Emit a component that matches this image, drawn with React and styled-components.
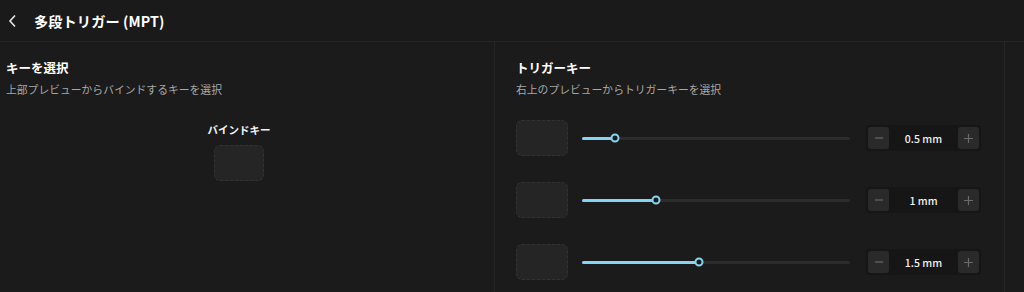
import React from "react";
import styled, { createGlobalStyle } from "styled-components";

const GlobalStyle = createGlobalStyle`
  html, body {
    margin: 0;
    padding: 0;
    background: #1b1b1b;
  }
  body {
    font-family: "Noto Sans CJK JP", "Noto Sans", sans-serif;
    color: #f2f2f2;
  }
`;

const Page = styled.div`
  width: 1024px;
  height: 292px;
  overflow: hidden;
  background: #1b1b1b;
  display: flex;
  flex-direction: column;
`;

const Header = styled.div`
  height: 41px;
  flex-shrink: 0;
  display: flex;
  align-items: center;
  gap: 14px;
  padding-left: 8px;
  border-bottom: 1px solid #262626;
  background: #1a1a1a;
`;

const BackButton = styled.button`
  background: none;
  border: none;
  padding: 0;
  width: 12px;
  height: 16px;
  display: flex;
  align-items: center;
  cursor: pointer;
`;

const Title = styled.h1`
  margin: 0;
  font-size: 14.2px;
  font-weight: 700;
  color: #ffffff;
  letter-spacing: 0.1px;
`;

const Body = styled.div`
  flex: 1;
  display: flex;
`;

const Panel = styled.section`
  width: ${(p) => p.width}px;
  flex-shrink: 0;
  box-sizing: border-box;
  padding: ${(p) => p.pad};
  border-right: 1px solid #262626;
`;

const Filler = styled.div`
  flex: 1;
`;

const SectionTitle = styled.h2`
  margin: 0;
  font-size: 12.5px;
  font-weight: 700;
  color: #ffffff;
  line-height: 18px;
`;

const SectionDesc = styled.p`
  margin: 4px 0 0;
  font-size: 10.8px;
  color: #a8a8a8;
  line-height: 16px;
`;

const BindArea = styled.div`
  display: flex;
  flex-direction: column;
  align-items: center;
  width: 466px;
  margin-top: 26px;
  gap: 8px;
`;

const BindLabel = styled.div`
  font-size: 10.5px;
  font-weight: 700;
  color: #f2f2f2;
  line-height: 14px;
`;

const KeySlot = styled.div`
  width: ${(p) => p.w}px;
  height: 36px;
  box-sizing: border-box;
  border: 1px dashed #333333;
  border-radius: 6px;
  background: #252525;
  flex-shrink: 0;
`;

const Rows = styled.div`
  margin-top: 23px;
  display: flex;
  flex-direction: column;
  gap: 26px;
`;

const Row = styled.div`
  display: flex;
  align-items: center;
  height: 36px;
`;

const Track = styled.div`
  position: relative;
  width: 268px;
  height: 3px;
  border-radius: 2px;
  background: #2c2c2c;
  margin-left: 14px;
`;

const Fill = styled.div`
  position: absolute;
  left: 0;
  top: 0;
  bottom: 0;
  border-radius: 2px;
  background: #86d4f2;
`;

const Thumb = styled.div`
  position: absolute;
  top: 50%;
  width: 9px;
  height: 9px;
  box-sizing: border-box;
  border: 2px solid #86d4f2;
  border-radius: 50%;
  background: #1b1b1b;
  transform: translate(-50%, -50%);
`;

const Stepper = styled.div`
  margin-left: 16px;
  width: 115px;
  height: 26px;
  box-sizing: border-box;
  padding: 2px;
  border-radius: 4px;
  background: #161616;
  display: flex;
  align-items: center;
  justify-content: space-between;
`;

const StepButton = styled.button`
  width: 21px;
  height: 22px;
  border: none;
  border-radius: 3px;
  background: #2a2a2a;
  display: flex;
  align-items: center;
  justify-content: center;
  padding: 0;
`;

const StepValue = styled.span`
  font-size: 10.5px;
  color: #f2f2f2;
  font-weight: 500;
`;

const Minus = () => (
  <svg width="10" height="10" viewBox="0 0 10 10">
    <path d="M1 5h8" stroke="#6a6a6a" strokeWidth="1.2" />
  </svg>
);

const Plus = () => (
  <svg width="11" height="11" viewBox="0 0 11 11">
    <path d="M1 5.5h9M5.5 1v9" stroke="#6a6a6a" strokeWidth="1.2" />
  </svg>
);

const triggers = [
  { value: "0.5 mm", pct: 12.3 },
  { value: "1 mm", pct: 27.6 },
  { value: "1.5 mm", pct: 43.7 },
];

const TriggerRow = ({ value, pct }) => (
  <Row>
    <KeySlot w={52} />
    <Track>
      <Fill style={{ width: `${pct}%` }} />
      <Thumb style={{ left: `${pct}%` }} />
    </Track>
    <Stepper>
      <StepButton>
        <Minus />
      </StepButton>
      <StepValue>{value}</StepValue>
      <StepButton>
        <Plus />
      </StepButton>
    </Stepper>
  </Row>
);

export default function App() {
  return (
    <Page>
      <GlobalStyle />
      <Header>
        <BackButton>
          <svg width="9" height="14" viewBox="0 0 9 14">
            <path
              d="M7 1.5L2 7l5 5.5"
              fill="none"
              stroke="#e6e6e6"
              strokeWidth="1.6"
            />
          </svg>
        </BackButton>
        <Title>多段トリガー (MPT)</Title>
      </Header>
      <Body>
        <Panel width={495} pad="17px 0 0 6px">
          <SectionTitle>キーを選択</SectionTitle>
          <SectionDesc>上部プレビューからバインドするキーを選択</SectionDesc>
          <BindArea>
            <BindLabel>バインドキー</BindLabel>
            <KeySlot w={50} />
          </BindArea>
        </Panel>
        <Panel width={510} pad="17px 0 0 21px">
          <SectionTitle>トリガーキー</SectionTitle>
          <SectionDesc>右上のプレビューからトリガーキーを選択</SectionDesc>
          <Rows>
            {triggers.map((t) => (
              <TriggerRow key={t.value} {...t} />
            ))}
          </Rows>
        </Panel>
        <Filler />
      </Body>
    </Page>
  );
}
